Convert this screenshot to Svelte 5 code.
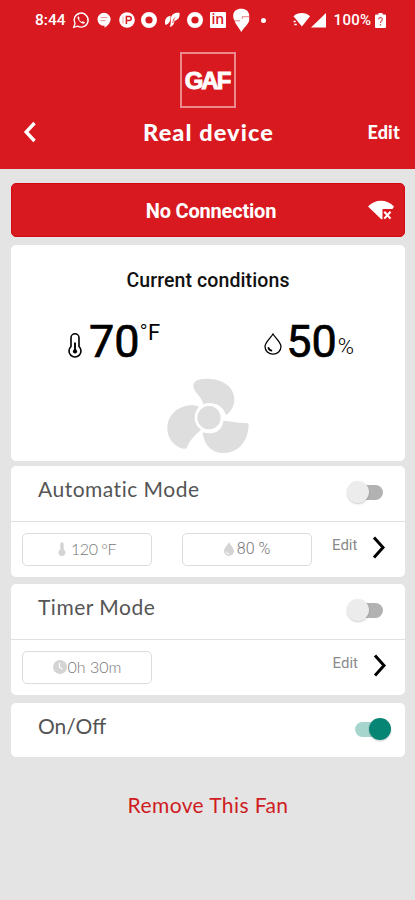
<script>
  let modes = $state([
    { name: 'Automatic Mode', on: false, values: [{ icon: 'temp', text: '120 °F' }, { icon: 'drop', text: '80 %' }] },
    { name: 'Timer Mode', on: false, values: [{ icon: 'clock', text: '0h 30m' }] }
  ]);
  let power = $state(true);
</script>

{#snippet toggle(on, flip)}
  <button class="toggle" class:on aria-label="Toggle" onclick={flip}>
    <span class="track"></span>
    <span class="knob"></span>
  </button>
{/snippet}

<div class="screen">
  <header>
    <div class="status">
      <span class="time">8:44</span>
      <div class="notifications">
        <!-- WhatsApp -->
        <svg viewBox="0 0 16 16">
          <path d="M.8 15.3 2 11.5A7 7 0 1 1 4.700 14.200Z" fill="none" stroke="#fff" stroke-width="1.4" />
          <path d="M5.400 4.200c-.9.400-1.100 1.500-.6 2.600 1 2.200 2.500 3.800 4.700 4.700 1.200.4 2.200 0 2.500-1l-2.200-1.300-.9.9C7.700 9.600 6.500 8.400 6 7.100l.8-.8Z" fill="#fff" />
        </svg>
        <!-- Chat -->
        <svg viewBox="0 0 16 16">
          <path d="M8 .8a6.600 6.600 0 0 1 6.600 6.500c0 3.700-3.300 6.400-6 8.700v-2.200H8A6.500 6.500 0 0 1 8 .8Z" fill="#fff" />
          <path d="M4.700 5.600h6.600M4.700 8.600h4.800" stroke="#e98a8c" stroke-width="1" />
        </svg>
        <!-- P badge -->
        <svg viewBox="0 0 16 16">
          <circle cx="8" cy="8" r="7.800" fill="#fff" />
          <path d="M4 4.500v7" stroke="#f0a0a2" stroke-width="1" />
          <path d="M7.400 12V4.500h2.800a2 2 0 0 1 0 4H7.400" fill="none" stroke="#d8191f" stroke-width="1.500" />
        </svg>
        <!-- Ring -->
        <svg viewBox="0 0 16 16"><circle cx="8" cy="8" r="5.800" fill="none" stroke="#fff" stroke-width="4.400" /></svg>
        <!-- Leaves -->
        <svg viewBox="0 0 16 16">
          <path d="M1.500 13C0 8.500 2 4.500 6.500 3.800 7 8.300 5.500 12 1.500 13ZM5.600 15C7 12.700 6.700 9.800 7 6 7.500 2 11 .4 15.500.8c.6 4.400-1.200 7.400-5 8-.2 3-1.600 5.600-4.900 6.200Z" fill="#fff" />
          <path d="M8.800 11c.2-2 .9-4 2.200-5.500" fill="none" stroke="#d8191f" stroke-width=".8" />
        </svg>
        <!-- Ring -->
        <svg viewBox="0 0 16 16"><circle cx="8" cy="8" r="5.800" fill="none" stroke="#fff" stroke-width="4.400" /></svg>
        <!-- LinkedIn -->
        <span class="linkedin">in</span>
        <!-- Swiggy -->
        <svg viewBox="0 0 16 16">
          <path d="M8.200 20C6.300 16 2 12 1.600 8.500.5 7.200.2 5.500.2 3.800.2-1 3.800-3.300 8-3.300c4.800 0 8.200 2.700 8.200 6.500v5C15.600 12 11 15.500 8.200 20Z" fill="#fff" />
          <path d="M16.500 4.700H9.200v2.200M2 8.800h5" fill="none" stroke="#e25a5e" stroke-width=".8" />
        </svg>
      </div>
      <span class="dot"></span>
      <svg class="wifi" viewBox="0 0 17 16">
        <path d="M.5 4.200C5-.1 12.500-.1 17 4.200L8.900 14.500Z" fill="#fff" />
        <path d="M0 8h3.700v7H0z" fill="#d8191f" />
        <path d="M.5 9.500h2.200M1.300 12.500h2.500" stroke="#fff" stroke-width="1.300" />
      </svg>
      <svg class="signal" viewBox="0 0 15 15"><path d="M15 0v14.500H0Z" fill="#fff" /></svg>
      <span class="percent">100%</span>
      <svg class="battery" viewBox="0 0 11 15">
        <path d="M3.500 0h4v1.500H10q1 0 1 1V14q0 1-1 1H1q-1 0-1-1V2.500q0-1 1-1h2.500Z" fill="#fff" />
        <path d="M3.600 6.200C3.800 4 7.600 4.200 7.300 6.500 7.200 8 5.500 8 5.500 10M5.500 11v1.500" fill="none" stroke="#dd5054" stroke-width="1.200" />
      </svg>
    </div>

    <div class="logo">GAF</div>

    <nav>
      <button class="back" aria-label="Back">
        <svg viewBox="0 0 14 22"><path d="M11.500 2 3.200 11l8.300 9" fill="none" stroke="#fff" stroke-width="3.400" /></svg>
      </button>
      <h1>Real device</h1>
      <button class="edit-device">Edit</button>
    </nav>
  </header>

  <main>
    <section class="banner">
      <span>No Connection</span>
      <svg viewBox="0 0 26 20">
        <path d="M0 6.500C7-1.300 19-1.300 26 6.500L24.500 9h-10v10.200h-1.200Z" fill="#fff" />
        <path d="m16.300 11.800 6.200 6.800m0-6.800-6.200 6.800" stroke="#fff" stroke-width="2.100" />
      </svg>
    </section>

    <section class="card conditions">
      <h2>Current conditions</h2>
      <div class="readings">
        <div class="reading temperature">
          <svg viewBox="0 0 14 25" fill="none" stroke="#000" stroke-width="1.600">
            <path d="M3 13.500V4.800a4 4 0 0 1 8 0v8.700a6 6 0 1 1-8 0Z" />
            <path d="M7 9.500v9" stroke-width="1.900" />
            <circle cx="7" cy="18.400" r="2.100" fill="#000" stroke="none" />
          </svg>
          <span class="number">70</span><span class="unit"><span class="degree">°</span>F</span>
        </div>
        <div class="reading humidity">
          <svg viewBox="0 0 18 22" fill="none" stroke="#000" stroke-width="1.300">
            <path d="M9 1C6.500 5 1 9.500 1 13.600a8 7.600 0 0 0 16 0C17 9.500 11.500 5 9 1Z" />
            <path d="M4.200 14.200c.5 2.200 2 3.300 4 3.500" stroke-width="1.600" />
          </svg>
          <span class="number">50</span><span class="unit">%</span>
        </div>
      </div>
      <svg class="fan" viewBox="51 36 246 228" fill="#dedede">
        <path d="M131 68C126 54 138 46 152 43c22-4 48 0 64 7 22 10 37 29 37 53 0 20-9 36-25 48-6-22-24-36-48-36-8 0-14 1-20 4-2-22-24-33-29-51Z" />
        <path d="M147 125c-15-6-34-5-50 1-28 10-45 35-45 63 0 24 11 43 29 54 8 5 17 10 29 7 6-22 23-36 44-58-20-18-24-44-7-67Z" />
        <path d="M158 202c2 28 18 50 38 58 22 8 49 4 68-10 20-15 30-40 32-68 0-6-2-8-7-8-24 1-48-6-69-7-2 30-28 45-62 35Z" />
        <circle cx="177" cy="158" r="39" stroke="#fff" stroke-width="8" />
      </svg>
    </section>

    {#each modes as mode}
      <section class="card mode">
        <div class="row">
          <h3>{mode.name}</h3>
          {@render toggle(mode.on, () => (mode.on = !mode.on))}
        </div>
        <div class="settings">
          {#each mode.values as value}
            <div class="value {value.icon}">
              {#if value.icon === 'temp'}
                <svg viewBox="0 0 8 14"><path d="M2.300 7.500V2a1.700 1.700 0 0 1 3.400 0v5.500a3.500 3.500 0 1 1-3.400 0Z" /></svg>
              {:else if value.icon === 'drop'}
                <svg viewBox="0 0 10 14"><path d="M5 0C3.500 3.500 0 6 0 9.200a5 4.800 0 0 0 10 0C10 6 6.500 3.500 5 0Z" /><path d="M2.200 9.300a3 3 0 0 0 3 2.800" fill="none" stroke="#fff" /></svg>
              {:else}
                <svg viewBox="0 0 14 14"><circle cx="7" cy="7" r="7" /><path d="M6.500 2.800v4.500l3 2" fill="none" stroke="#fff" stroke-width="1.100" /></svg>
              {/if}
              <span>{value.text}</span>
            </div>
          {/each}
          <button class="edit-mode">
            <span>Edit</span>
            <svg viewBox="0 0 14 23"><path d="m2 1.500 9 10-9 10" fill="none" stroke="#000" stroke-width="3" /></svg>
          </button>
        </div>
      </section>
    {/each}

    <section class="card power">
      <div class="row">
        <h3>On/Off</h3>
        {@render toggle(power, () => (power = !power))}
      </div>
    </section>

    <button class="remove">Remove This Fan</button>
  </main>
</div>

<style>
  :global(body) {
    background: #e4e4e4;
  }

  * {
    box-sizing: border-box;
  }

  h1, h2, h3 {
    margin: 0;
  }

  button {
    padding: 0;
    border: 0;
    background: none;
    font: inherit;
    color: inherit;
  }

  svg {
    display: block;
    flex: none;
    overflow: visible;
  }

  .screen {
    width: 415px;
    height: 900px;
    overflow: hidden;
    background: #e4e4e4;
    font-family: Lato, 'Liberation Sans', sans-serif;
  }

  header {
    height: 169px;
    background: #d8191f;
    color: #fff;
    display: flex;
    flex-direction: column;
    align-items: center;
  }

  .status {
    width: 100%;
    height: 40px;
    padding-left: 35px;
    display: flex;
    align-items: center;
    font: 500 15px Roboto, sans-serif;
  }
  .time {
    width: 38px;
    font-size: 15.500px;
  }
  .notifications {
    display: flex;
    gap: 6.800px;
  }
  .notifications svg {
    width: 16px;
    height: 16px;
  }
  .linkedin {
    width: 16px;
    height: 16px;
    border-radius: 1px;
    background: #fff;
    color: #d8191f;
    font: 600 14px/14px 'Open Sans', sans-serif;
    text-align: center;
  }
  .dot {
    width: 5px;
    height: 5px;
    margin: 0 27px 0 12px;
    border-radius: 50%;
    background: #fff;
  }
  .wifi {
    width: 17px;
    height: 16px;
  }
  .signal {
    width: 15px;
    height: 15px;
    margin-left: 1px;
  }
  .percent {
    width: 41px;
    margin-left: 8px;
    letter-spacing: 0.3px;
  }
  .battery {
    width: 11px;
    height: 15px;
  }

  .logo {
    width: 56px;
    height: 56px;
    margin-top: 12px;
    border: 2px solid #eb8a8c;
    font: 700 24px/53px 'Liberation Sans', sans-serif;
    letter-spacing: -2px;
    text-indent: -1px;
    text-align: center;
    -webkit-text-stroke: 0.9px #fff;
  }

  nav {
    width: 100%;
    height: 48px;
    padding: 0 15px 0 23px;
    display: grid;
    grid-template-columns: 60px 1fr 66px;
    align-items: center;
  }
  .back svg {
    width: 14px;
    height: 22px;
  }
  h1 {
    font-size: 23.500px;
    font-weight: 900;
    line-height: 28px;
    text-align: center;
    white-space: nowrap;
    letter-spacing: 1.100px;
  }
  .edit-device {
    justify-self: end;
    font-size: 18px;
    font-weight: 900;
    letter-spacing: 0.2px;
  }

  main {
    padding: 14px 10px 0 11px;
    display: flex;
    flex-direction: column;
  }

  .banner {
    height: 54px;
    padding: 0 10px 0 31px;
    border: 1px solid #d20a10;
    border-radius: 5px;
    background: #d8191f;
    color: #fff;
    display: flex;
    align-items: center;
    font: 700 20px Roboto, sans-serif;
  }
  .banner span {
    flex: 1;
    text-align: center;
    padding: 1px 0 0 11px;
    letter-spacing: -0.200px;
  }
  .banner svg {
    width: 26px;
    height: 20px;
  }

  .card {
    border-radius: 5px;
    background: #fff;
  }

  .conditions {
    height: 216px;
    margin: 8px 0 5px;
    display: flex;
    flex-direction: column;
    align-items: center;
    font-family: Roboto, sans-serif;
    color: #111;
  }
  h2 {
    margin-top: 24px;
    font-size: 19.500px;
    font-weight: 500;
    line-height: 24px;
    letter-spacing: 0.1px;
  }
  .readings {
    width: 100%;
    height: 54px;
    margin-top: 22px;
    padding: 0 51px 0 57px;
    display: flex;
    justify-content: space-between;
  }
  .reading {
    display: flex;
    align-items: center;
    color: #000;
  }
  .number {
    font-size: 45px;
    font-weight: 400;
    line-height: 54px;
    -webkit-text-stroke: 0.7px #000;
  }
  .temperature svg {
    width: 14px;
    height: 25px;
    margin: 6px 7px 0 0;
  }
  .temperature .unit {
    align-self: flex-start;
    margin-top: 5px;
    font-size: 22px;
  }
  .degree {
    font-weight: 300;
  }
  .humidity svg {
    width: 18px;
    height: 22px;
    margin: 4px 4px 0 0;
  }
  .humidity .unit {
    margin: 9px 0 0 1px;
    font-size: 22px;
    font-weight: 300;
  }
  .fan {
    width: 82px;
    height: 76px;
    margin-top: 8px;
  }

  .mode {
    height: 111px;
    margin-bottom: 7px;
  }
  .row {
    height: 55px;
    padding: 0 14px 0 27px;
    display: flex;
    justify-content: space-between;
    align-items: center;
  }
  h3 {
    margin-bottom: 10px;
    font-size: 21px;
    font-weight: 400;
    letter-spacing: 0.5px;
    color: #555;
  }
  .power h3 {
    letter-spacing: 0;
  }

  .toggle {
    width: 44px;
    height: 24px;
    margin-top: -2px;
    position: relative;
  }
  .track {
    position: absolute;
    top: 4px;
    left: 5px;
    width: 31px;
    height: 15px;
    border-radius: 8px;
    background: #b2b2b2;
  }
  .knob {
    position: absolute;
    top: 0;
    left: 0;
    width: 22px;
    height: 22px;
    border-radius: 50%;
    background: #ececec;
    box-shadow: 0 1px 2px #0003;
  }
  .on .track {
    left: 8px;
    background: #a6d5cd;
  }
  .on .knob {
    left: 22px;
    background: #078574;
  }

  .settings {
    height: 56px;
    border-top: 1.500px solid #e0e0e0;
    padding: 0 18px 0 11px;
    display: flex;
    align-items: center;
    gap: 30px;
  }
  .value {
    flex: none;
    width: 130px;
    height: 33px;
    border: 1px solid #dcdcdc;
    border-radius: 5px;
    display: flex;
    align-items: center;
    justify-content: center;
    gap: 5px;
    font-size: 16px;
    font-weight: 300;
    color: #777;
    padding-bottom: 2px;
  }
  .value svg {
    height: 14px;
    fill: #d4d4d4;
  }
  .temp {
    letter-spacing: -0.5px;
  }
  .drop {
    gap: 3px;
    font-family: Roboto, sans-serif;
  }
  .clock {
    gap: 1px;
  }
  .temp svg {
    width: 8px;
  }
  .drop svg {
    width: 10px;
  }
  .clock svg {
    width: 14px;
  }

  .edit-mode {
    margin: -4px 0 0 -11px;
    display: flex;
    align-items: center;
    gap: 15px;
    font: 400 15px Roboto, sans-serif;
    color: #8b8b8b;
  }
  /* the drop value leaves just enough room; a lone clock needs the push */
  .drop + .edit-mode,
  .clock + .edit-mode {
    margin-left: auto;
  }
  .drop + .edit-mode {
    margin-left: -10px;
  }
  .edit-mode span {
    margin-top: -5px;
  }
  .edit-mode svg {
    width: 14px;
    height: 23px;
  }

  .power {
    height: 54px;
    margin-top: 1px;
  }

  .remove {
    align-self: center;
    margin-top: 36px;
    font-size: 21px;
    line-height: 24px;
    letter-spacing: 0.4px;
    color: #cf1c22;
  }
</style>
